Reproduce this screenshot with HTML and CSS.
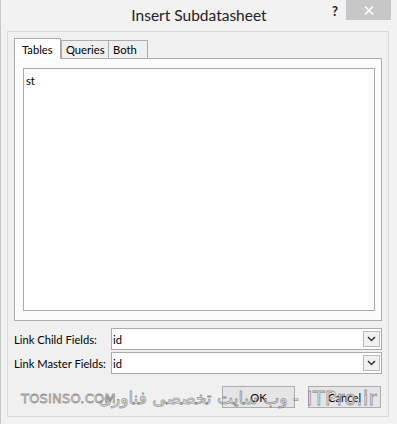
FILE: index.html
```html
<!DOCTYPE html>
<html>
<head>
<meta charset="utf-8">
<link rel="stylesheet" href="styles.css">
</head>
<body>
<div class="window">
  <div class="titlebar">
    <div class="title">Insert Subdatasheet</div>
    <div class="help">?</div>
    <div class="close"><svg width="10" height="9" viewBox="0 0 10 9"><path d="M1 0.5 L9 8.5 M9 0.5 L1 8.5" stroke="#fff" stroke-width="1.6"/></svg></div>
  </div>
  <div class="client">
    <div class="tabs">
      <div class="tab active">Tables</div>
      <div class="tab">Queries</div>
      <div class="tab">Both</div>
    </div>
    <div class="panel">
      <div class="listbox">
        <div class="item">st</div>
      </div>
    </div>
    <div class="fields">
      <div class="row">
        <div class="label">Link Child Fields:</div>
        <div class="combo"><span class="value">id</span><span class="drop"><svg width="9" height="6" viewBox="0 0 9 6"><path d="M1 1 L4.5 4.5 L8 1" fill="none" stroke="#333" stroke-width="1.5"/></svg></span></div>
      </div>
      <div class="row">
        <div class="label">Link Master Fields:</div>
        <div class="combo"><span class="value">id</span><span class="drop"><svg width="9" height="6" viewBox="0 0 9 6"><path d="M1 1 L4.5 4.5 L8 1" fill="none" stroke="#333" stroke-width="1.5"/></svg></span></div>
      </div>
    </div>
    <div class="buttons">
      <div class="btn">OK</div>
      <div class="btn">Cancel</div>
    </div>
  </div>
  <div class="watermark">
    <span class="wm-latin">TOSINSO.COM</span>
    <span class="wm-fa" dir="rtl">- وب سایت تخصصی فناوری</span>
    <span class="wm-site">ITPro.ir</span>
  </div>
</div>
</body>
</html>
```
FILE: styles.css
```css
html, body {
  margin: 0;
  padding: 0;
}
body {
  width: 397px;
  height: 424px;
  overflow: hidden;
  font-family: Lato, "Noto Sans", sans-serif;
  font-size: 11.2px;
  color: #000;
}
.window {
  position: relative;
  width: 397px;
  height: 424px;
  background: #f2f2f3;
  box-sizing: border-box;
  border-left: 1px solid #c9c9c9;
  display: flex;
  flex-direction: column;
}
.titlebar {
  height: 31px;
  position: relative;
}
.title {
  position: absolute;
  left: 0;
  right: 0;
  top: 6px;
  text-align: center;
  font-size: 15.5px;
  color: #222;
}
.help {
  position: absolute;
  left: 331px;
  top: 3px;
  font-weight: bold;
  font-size: 13px;
  color: #222;
}
.close {
  position: absolute;
  left: 345px;
  top: 0;
  width: 45px;
  height: 20px;
  background: #c7c7c7;
  display: flex;
  align-items: center;
  justify-content: center;
}
.client {
  margin: 0 8px 0 6px;
  height: 386px;
  box-sizing: border-box;
  border: 1px solid #d9d9d9;
  background: #f0f0f0;
  padding: 6px 6px 0 6px;
  display: flex;
  flex-direction: column;
}
.tabs {
  display: flex;
  align-items: flex-end;
  height: 20px;
  position: relative;
  z-index: 1;
}
.tab {
  height: 18px;
  box-sizing: border-box;
  border: 1px solid #acacac;
  border-bottom: none;
  background: #efefef;
  padding: 1px 4px 0 4px;
  line-height: 16px;
  margin-left: -1px;
}
.tab.active {
  height: 21px;
  margin-left: 0;
  margin-bottom: -1px;
  background: #fff;
  padding: 3px 7px 0 7px;
  width: 47px;
}
.tab:nth-child(2) { margin-left: 0; width: 48px; }
.tab:nth-child(3) { width: 40px; }
.panel {
  width: 368px;
  height: 263px;
  box-sizing: border-box;
  border: 1px solid #acacac;
  background: #fbfbfb;
  padding: 9px 6px 9px 8px;
}
.listbox {
  height: 100%;
  box-sizing: border-box;
  border: 1px solid #a9a9a9;
  background: #fff;
  padding: 4px 2px;
}
.item {
  line-height: 16px;
}
.fields {
  margin-top: 7px;
  display: flex;
  flex-direction: column;
  gap: 2px;
}
.row {
  display: flex;
  align-items: center;
  height: 22px;
}
.label {
  width: 97px;
  white-space: nowrap;
}
.combo {
  flex: 1;
  height: 22px;
  box-sizing: border-box;
  border: 1px solid #acacac;
  background: #fff;
  display: flex;
  align-items: center;
  justify-content: space-between;
  padding-left: 1px;
}
.drop {
  width: 17px;
  height: 16px;
  box-sizing: border-box;
  margin-right: 1px;
  border: 1px solid #b9b9b9;
  background: #f0f0f0;
  display: flex;
  align-items: center;
  justify-content: center;
}
.buttons {
  margin-top: 12px;
  display: flex;
  justify-content: flex-end;
  gap: 13px;
  padding-right: 1px;
}
.btn {
  width: 73px;
  height: 22px;
  box-sizing: border-box;
  border: 1px solid #adadad;
  background: #e5e5e5;
  display: flex;
  align-items: center;
  justify-content: center;
}
.watermark {
  position: absolute;
  left: 20px;
  top: 388px;
  width: 356px;
  height: 26px;
  color: rgba(240, 240, 240, 0.55);
  -webkit-text-stroke: 0.8px rgba(110, 110, 110, 0.7);
  pointer-events: none;
  white-space: nowrap;
}
.wm-latin {
  position: absolute;
  left: 0;
  top: 3px;
  font-family: "DejaVu Sans", sans-serif;
  font-size: 13px;
  letter-spacing: 0.2px;
}
.wm-fa {
  position: absolute;
  right: 78px;
  top: 0;
  font-family: "DejaVu Sans", sans-serif;
  font-size: 17px;
}
.wm-site {
  position: absolute;
  right: 0;
  top: -1px;
  font-family: "DejaVu Sans", sans-serif;
  font-size: 19px;
  letter-spacing: 0.5px;
}
```
